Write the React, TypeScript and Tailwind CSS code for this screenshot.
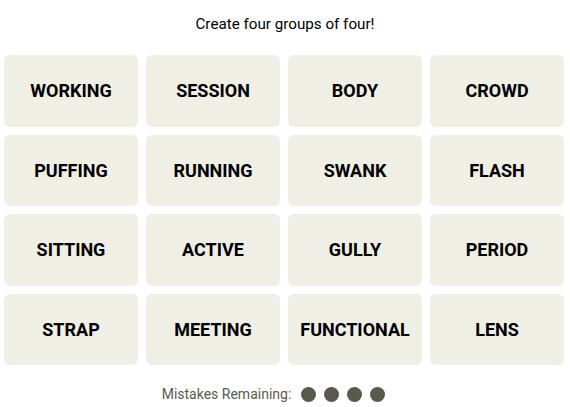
import React from 'react'

const words = [
  'WORKING', 'SESSION', 'BODY', 'CROWD',
  'PUFFING', 'RUNNING', 'SWANK', 'FLASH',
  'SITTING', 'ACTIVE', 'GULLY', 'PERIOD',
  'STRAP', 'MEETING', 'FUNCTIONAL', 'LENS',
]

export default function App() {
  return (
    <div className="w-[570px] h-[407px] bg-white" style={{ fontFamily: 'Roboto, "Liberation Sans", sans-serif' }}>
      <p className="pt-[14px] text-center text-[15.2px] leading-[20px] text-black">Create four groups of four!</p>
      <div className="mt-[21px] ml-[4px] grid w-[560px] grid-cols-4 gap-x-[8px] gap-y-[8px]">
        {words.map((w) => (
          <div
            key={w}
            className="flex h-[71.5px] items-center justify-center rounded-[6px] bg-[#efefe6] text-[18px] font-bold text-black"
          >
            {w}
          </div>
        ))}
      </div>
      <div className="mt-[19px] flex items-center justify-center gap-[10px] pr-[23px]">
        <span className="text-[14px] text-[#5a594e]">Mistakes Remaining:</span>
        <div className="flex gap-[8px]">
          {[0, 1, 2, 3].map((i) => (
            <span key={i} className="h-[15px] w-[15px] rounded-full bg-[#5a594e]" />
          ))}
        </div>
      </div>
    </div>
  )
}
